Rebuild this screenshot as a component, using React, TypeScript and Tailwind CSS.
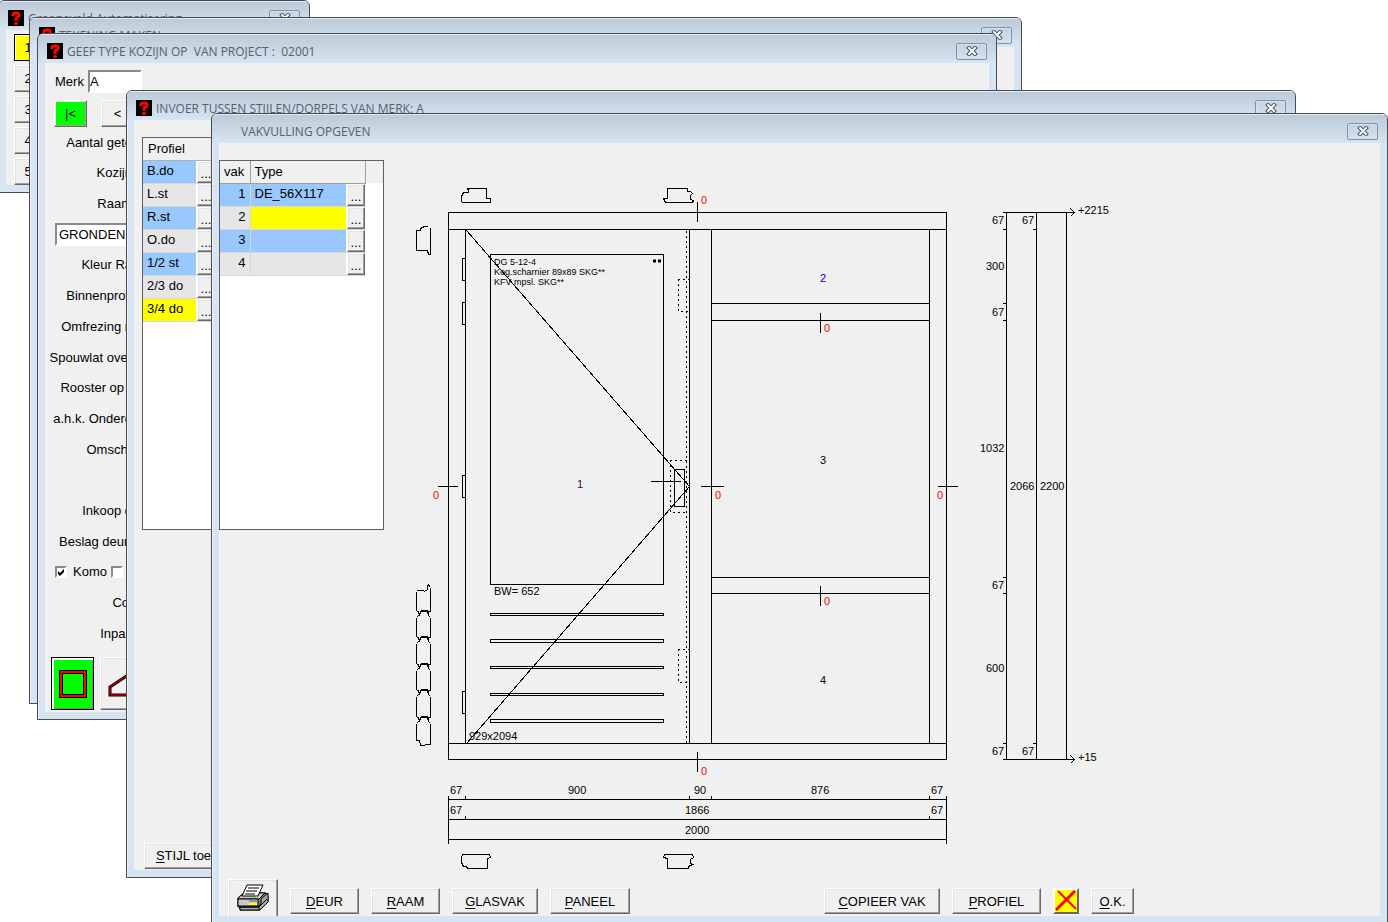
import type { ReactNode } from 'react';

const BEVEL =
  'border border-t-white border-l-white border-r-[#696969] border-b-[#696969] shadow-[inset_-1px_-1px_#a0a0a0,inset_1px_1px_#e3e3e3]';
const RAISED = `${BEVEL} bg-[#f0f0f0]`;
const SUNKEN =
  'border-2 border-t-[#8a8a8a] border-l-[#8a8a8a] border-r-white border-b-white bg-white';

const HelpIcon = () => (
  <svg viewBox="0 0 16 16" className="size-4 shrink-0" aria-hidden="true">
    <rect width="16" height="16" fill="#000" />
    <path
      d="M5 6V4L6 3H10L11 4V6L8 8V11"
      fill="none"
      stroke="#f00"
      strokeWidth="3"
      strokeLinejoin="bevel"
    />
    <path d="M7 12h2l1 1v1l-1 1H7l-1-1v-1z" fill="#f00" />
  </svg>
);

const CloseButton = () => (
  <button
    type="button"
    aria-label="Sluiten"
    className="flex h-[17px] w-[31px] shrink-0 items-center justify-center rounded-xs border border-[#8292ad] shadow-[inset_0_0_0_1px_#d3dfea]"
  >
    <svg viewBox="0 0 12 10" className="h-[10px] w-3" fill="none" strokeLinecap="square" aria-hidden="true">
      <path d="M3 2L9 8M9 2L3 8" stroke="#4c5464" strokeWidth="4" />
      <path d="M3 2L9 8M9 2L3 8" stroke="#fff" strokeWidth="2" />
    </svg>
  </button>
);

interface WindowProps {
  title: string;
  place: string;
  hasIcon?: boolean;
  children?: ReactNode;
}

const Window = ({ title, place, hasIcon = true, children }: WindowProps) => (
  <section
    className={`absolute flex flex-col overflow-hidden rounded-t-md border border-[#484c52] bg-[#d7e4f2] px-[7px] pb-[7px] shadow-[inset_1px_1px_#edf3f9] ${place}`}
  >
    <header className="-mx-[7px] flex h-[29px] shrink-0 items-center justify-between bg-linear-to-b from-[#bccad8] to-[#d7e4f2] pt-[5px] pr-[9px] pl-[9px] shadow-[inset_0_1px_#e4ebf2]">
      <div className="flex items-center gap-1">
        {hasIcon ? <HelpIcon /> : <span className="w-4" />}
        <h2 className="pt-px font-['Open_Sans',sans-serif] text-[12px] whitespace-pre text-[#56616b]">{title}</h2>
      </div>
      <CloseButton />
    </header>
    <div className="flex min-h-0 flex-1 flex-col bg-[#f0f0f0]">{children}</div>
  </section>
);

const PushButton = ({ label, width }: { label: string; width: string }) => (
  <button type="button" className={`h-[26px] shrink-0 pt-0.5 text-[13px] ${RAISED} ${width}`}>
    <span className="underline underline-offset-2">{label[0]}</span>
    {label.slice(1)}
  </button>
);

const MoreButton = () => (
  <button type="button" className={`block h-[22px] w-[18px] pt-1 text-[13px] leading-4 ${RAISED}`}>
    ...
  </button>
);

const menuKeys = ['2', '3', '4', '5'];

const formLabels = [
  'Aantal gete',
  'Kozijn',
  'Raam',
  '',
  'Kleur Ra',
  'Binnenprofi',
  'Omfrezing n',
  'Spouwlat over',
  'Rooster op r',
  'a.h.k. Onderd',
  'Omschr',
  '',
  'Inkoop d',
  'Beslag deur/',
  'komo',
  'Col',
  'Inpas',
];

const profiles = [
  { name: 'B.do', fill: 'bg-[#99c8ff]' },
  { name: 'L.st', fill: 'bg-[#e6e6e6]' },
  { name: 'R.st', fill: 'bg-[#99c8ff]' },
  { name: 'O.do', fill: 'bg-[#e6e6e6]' },
  { name: '1/2 st', fill: 'bg-[#99c8ff]' },
  { name: '2/3 do', fill: 'bg-[#e6e6e6]' },
  { name: '3/4 do', fill: 'bg-[#ffff00]' },
];

const panes = [
  { nr: 1, type: 'DE_56X117', row: 'bg-[#99c8ff]', fill: 'bg-[#99c8ff]' },
  { nr: 2, type: '', row: 'bg-[#e6e6e6]', fill: 'bg-[#ffff00]' },
  { nr: 3, type: '', row: 'bg-[#99c8ff]', fill: 'bg-[#99c8ff]' },
  { nr: 4, type: '', row: 'bg-[#e6e6e6]', fill: 'bg-[#e6e6e6]' },
];

// x, y (baseline), text
const dimensions: [number, number, string][] = [
  [450, 794, '67'],
  [568, 794, '900'],
  [694, 794, '90'],
  [811, 794, '876'],
  [931, 794, '67'],
  [450, 814, '67'],
  [685, 814, '1866'],
  [931, 814, '67'],
  [685, 834, '2000'],
  [992, 224, '67'],
  [1022, 224, '67'],
  [986, 270, '300'],
  [992, 316, '67'],
  [980, 452, '1032'],
  [1010, 490, '2066'],
  [1040, 490, '2200'],
  [992, 589, '67'],
  [986, 672, '600'],
  [992, 755, '67'],
  [1022, 755, '67'],
  [1078, 214, '+2215'],
  [1078, 761, '+15'],
  [494, 595, 'BW= 652'],
  [469, 740, '929x2094'],
  [820, 464, '3'],
  [820, 684, '4'],
];

const zeros = [
  [701, 204],
  [701, 775],
  [433, 499],
  [715, 499],
  [937, 499],
  [824, 332],
  [824, 605],
];

const hinges = [258, 302, 475, 691];
const slats = [
  [613, 2],
  [639, 3],
  [666, 2],
  [693, 2],
  [719, 3],
];
const joints = [612, 638, 665, 691, 718];

const FrameDrawing = () => (
  <svg
    viewBox="384 143 996 736"
    className="h-[736px] w-[996px] shrink-0 font-['Liberation_Sans',Arial,sans-serif]"
    role="img"
    aria-label="Kozijn"
  >
    <g transform="translate(.5 .5)" fill="none" stroke="#000" shapeRendering="crispEdges">
      {/* frame */}
      <path d="M448 212H946V759H448ZM448 229H946M448 743H946M465 229V743M689 229V743M711 229V743M929 229V743" />
      <path d="M711 303H929M711 320H929M711 577H929M711 593H929" />

      {/* door leaf */}
      <path d="M490 254H663V584H490Z" />
      <path d="M466 230L689 486L466 743" />
      {hinges.map((y) => (
        <path key={y} d={`M465 ${y}H462V${y + 22}H465`} />
      ))}
      {slats.map(([y, h]) => (
        <rect key={y} x="490" y={y} width="173" height={h} />
      ))}
      <path strokeDasharray="2 3" d="M686 230V743M689 279H678V311H689M689 649H678V682H689M686 460H670V512H686" />
      <path d="M674 469H684V506H674ZM650 481H680" />

      {/* section marks */}
      <path d="M697 201V221M697 751V771M437 486H457M700 486H723M937 486H957M820 312V332M820 585V605" />

      {/* dimension lines */}
      <path d="M448 795V843M946 795V843M448 799H946M448 819H946M448 839H946" />
      <path d="M465 795V799M689 795V799M711 795V799M929 795V799M465 815V819M929 815V819" />
      <path d="M1006 212V759M1036 212V759M1066 212V759M1002 212H1074M1002 759H1074" />
      <path d="M1070 208L1074 212L1070 216M1070 755L1074 759L1070 763" />
      <path d="M1002 229H1006M1002 303H1006M1002 320H1006M1002 577H1006M1002 593H1006M1002 743H1006M1032 229H1036M1032 743H1036" />

      {/* profile sections */}
      <path d="M467 188H486V198H490V202H462L461 201V196L463 192H468V190Z" />
      <path d="M667 188H687V191H690L692 193L690 195V199L693 200L692 202H665L663 198H667Z" />
      <path d="M430 227V254H428L427 250H416V230H420V228L424 226H427" />
      <path d="M462 854H489L490 857L487 858V868H467L466 866H463L461 862V857Z" />
      <path d="M664 854H692L693 857L690 859V863L692 864L688 866V868H667V858L663 857Z" />
      <path d="M416 590H423L424 591L427 589V586L428 584L430 587" />
      <path d="M416 591V610M430 587V610" />
      {joints.map((y, i) => (
        <g key={y}>
          <path d={`M416 ${y - 1}H418L419 ${y + 3}L420 ${y - 1}H427L428 ${y + 3}V${y - 1}H430M420 ${y - 2}H427`} />
          <path d={`M416 ${y + 5}V${(joints[i + 1] ?? 742) - 2}M430 ${y + 5}V${(joints[i + 1] ?? 746) - 2}`} />
          <path d={`M416 ${y + 5}L418 ${y + 3}M430 ${y + 5}L428 ${y + 3}`} />
        </g>
      ))}
      <path d="M416 740H419L420 745H424L425 744H430" />
    </g>

    <g fontSize="11">
      {dimensions.map(([x, y, text]) => (
        <text key={`${x}-${y}`} x={x} y={y}>
          {text}
        </text>
      ))}
      <text x="577" y="488" fill="#400050">1</text>
      <text x="820" y="282" fill="#0000e0">2</text>
      {zeros.map(([x, y]) => (
        <text key={`${x}-${y}`} x={x} y={y} fill="#ff0000">0</text>
      ))}
    </g>
    <g fontSize="9">
      <text x="494" y="265">DG 5-12-4</text>
      <text x="494" y="275">Kog.scharnier 89x89 SKG**</text>
      <text x="494" y="285">KFV mpsl. SKG**</text>
    </g>
    <path d="M653 261h3M658 261h3" stroke="#000" strokeWidth="3" />
  </svg>
);

const PrinterIcon = () => (
  <svg viewBox="0 0 32 28" className="h-7 w-8" aria-hidden="true" stroke="#000" strokeLinejoin="round">
    <path d="M1 14L7 9H29L31 12V18L23 26H3V23H1Z" fill="#808080" />
    <path d="M1 14L7 9H28L22 15H1Z" fill="#c8c8c8" />
    <path d="M10 1H26L21 12H5Z" fill="#fff" />
    <path d="M11 4H22M9 7H20M8 10H18" />
    <path d="M1 15H21V22H1Z" fill="#c8c8c8" />
    <path d="M3 23H21L24 20V15L31 9V18L23 26H3Z" fill="#a8a8a8" />
    <path d="M3 23H22L30 15M22 23V26" fill="none" />
    <path d="M17 14L20 12" stroke="#0f0" />
    <path d="M12 17H20" stroke="#666" />
    <path d="M12 20H20" stroke="#ff0" strokeWidth="2" />
  </svg>
);

const TypeWindow = () => (
  <Window title="GEEF TYPE KOZIJN OP  VAN PROJECT :  02001" place="top-[33px] left-[37px] h-[687px] w-[960px]">
    <div className="flex items-center gap-1 pt-[7px] pl-[10px]">
      <label htmlFor="merk">Merk</label>
      <input id="merk" defaultValue="A" className={`h-[23px] w-[54px] ${SUNKEN}`} />
    </div>
    <div className="flex gap-[14px] pt-[7px] pl-[9px]">
      <button type="button" className={`h-[27px] w-[33px] bg-[#00ff00] ${BEVEL}`}>
        |&lt;
      </button>
      <button type="button" className={`h-[27px] w-[33px] ${RAISED}`}>
        &lt;
      </button>
    </div>
    <div className="flex flex-1 flex-col">
      {formLabels.map((label, i) => (
        <div key={i} className="flex flex-1 items-center">
          {i === 3 ? (
            <input
              aria-label="Soort"
              defaultValue="GRONDEN"
              className={`ml-[10px] h-[23px] w-[90px] px-0.5 ${SUNKEN}`}
            />
          ) : label === 'komo' ? (
            <div className="flex items-center gap-1 pl-[10px]">
              <input
                id="komo"
                type="checkbox"
                defaultChecked
                className={`size-3 appearance-none ${SUNKEN}`}
              />
              <svg viewBox="0 0 8 8" className="pointer-events-none -ml-[14px] size-2" aria-hidden="true">
                <path d="M1 3L3 5L7 1V4L3 8L1 6Z" />
              </svg>
              <label htmlFor="komo" className="pl-1">
                Komo
              </label>
              <input type="checkbox" aria-label="Keur" className={`size-3 appearance-none ${SUNKEN}`} />
            </div>
          ) : (
            <span className="w-[87px] text-right whitespace-nowrap">{label}</span>
          )}
        </div>
      ))}
    </div>
    <div className="flex gap-1.5 pt-2 pb-0.5 pl-1.5">
      <button
        type="button"
        aria-label="Rechthoek"
        className="flex h-[53px] w-[43px] items-center justify-center border border-black bg-[#00ff00] shadow-[inset_2px_2px_#fff,inset_-1px_-1px_#808080]"
      >
        <svg viewBox="0 0 28 28" className="size-7" fill="none" shapeRendering="crispEdges" aria-hidden="true">
          <path d="M2 2H26V26H2Z" stroke="#000" strokeWidth="4" />
          <path d="M2 2H26V26H2Z" stroke="#f00" strokeWidth="2" />
        </svg>
      </button>
      <button type="button" aria-label="Schuin" className={`h-[53px] w-[43px] pl-[7px] ${RAISED}`}>
        <svg viewBox="0 0 28 28" className="size-7" fill="none" aria-hidden="true">
          <path d="M2 25V17L26 1V25Z" stroke="#000" strokeWidth="3" />
          <path d="M2 25V17L26 1V25Z" stroke="#f00" strokeWidth="1" />
        </svg>
      </button>
    </div>
  </Window>
);

const ProfileWindow = () => (
  <Window title="INVOER TUSSEN STIJLEN/DORPELS VAN MERK: A" place="top-[90px] left-[126px] h-[788px] w-[1170px]">
    <div className="mt-[17px] ml-2 h-[393px] w-[160px] border border-[#606060] bg-white">
      <table className="w-[74px] table-fixed border-collapse text-left">
        <colgroup>
          <col className="w-[53px]" />
          <col className="w-[21px]" />
        </colgroup>
        <thead>
          <tr className="h-[22px] bg-[#f0f0f0]">
            <th colSpan={2} className="border-b border-[#b0b0b0] p-0 pl-[5px] font-normal">
              Profiel
            </th>
          </tr>
        </thead>
        <tbody>
          {profiles.map(({ name, fill }) => (
            <tr key={name} className="h-[23px]">
              <td className={`border-b border-[#d8d8d8] p-0 pb-0.5 pl-1 leading-4 ${fill}`}>{name}</td>
              <td className="border-b border-[#d8d8d8] p-0 pl-px">
                <MoreButton />
              </td>
            </tr>
          ))}
        </tbody>
      </table>
    </div>
    <div className="mt-auto pb-px pl-[10px]">
      <button type="button" className={`h-[26px] w-[100px] ${RAISED}`}>
        <span className="underline underline-offset-2">S</span>TIJL toevoe
      </button>
    </div>
  </Window>
);

const PaneWindow = () => (
  <Window title="VAKVULLING OPGEVEN" place="top-[113px] right-0 -bottom-[2px] left-[211px]" hasIcon={false}>
    <div className="flex min-h-0 flex-1">
      <div className="mt-[17px] h-[370px] w-[165px] shrink-0 border border-[#606060] bg-white">
        <table className="w-full table-fixed border-collapse text-left">
          <colgroup>
            <col className="w-[30px]" />
            <col className="w-[96px]" />
            <col className="w-[19px]" />
            <col />
          </colgroup>
          <thead>
            <tr className="h-[22px] bg-[#f0f0f0]">
              <th className="border-r border-b border-[#a0a0a0] p-0 pl-1 font-normal">vak</th>
              <th colSpan={2} className="border-r border-b border-[#a0a0a0] p-0 pl-1 font-normal">
                Type
              </th>
              <th className="p-0" />
            </tr>
          </thead>
          <tbody>
            {panes.map(({ nr, type, row, fill }) => (
              <tr key={nr} className="h-[23px]">
                <td className={`border-r border-b border-[#d8d8d8] p-0 pr-1 pb-0.5 text-right leading-4 ${row}`}>
                  {nr}
                </td>
                <td className={`border-b border-[#d8d8d8] p-0 pb-0.5 pl-1 leading-4 ${fill}`}>{type}</td>
                <td className="border-b border-[#d8d8d8] p-0 pl-px">
                  <MoreButton />
                </td>
                <td className="p-0" />
              </tr>
            ))}
          </tbody>
        </table>
      </div>
      <FrameDrawing />
    </div>
    <footer className="flex h-[37px] shrink-0 items-start gap-3 overflow-hidden pl-[9px]">
      <button
        type="button"
        aria-label="Afdrukken"
        className={`flex h-[50px] w-[50px] shrink-0 justify-center pt-1 ${RAISED}`}
      >
        <PrinterIcon />
      </button>
      <div className="flex gap-3 pt-[9px]">
        <PushButton label="DEUR" width="w-[69px]" />
        <PushButton label="RAAM" width="w-[69px]" />
        <PushButton label="GLASVAK" width="w-[86px]" />
        <PushButton label="PANEEL" width="w-[80px]" />
      </div>
      <div className="ml-auto flex gap-3 pt-[9px] pr-[246px]">
        <PushButton label="COPIEER VAK" width="w-[116px]" />
        <PushButton label="PROFIEL" width="w-[89px]" />
        <button
          type="button"
          aria-label="Annuleren"
          className="flex size-[26px] items-center justify-center border-2 border-t-white border-l-white border-r-[#696969] border-b-[#696969] bg-[#ffff00]"
        >
          <svg viewBox="0 0 22 22" className="size-[22px]" stroke="#f00" strokeWidth="2" aria-hidden="true">
            <path d="M3 1L21 19" />
            <path d="M20 1L1 20" strokeWidth="3" />
          </svg>
        </button>
        <PushButton label="O.K." width="w-[43px]" />
      </div>
    </footer>
  </Window>
);

export default function App() {
  return (
    <main className="relative h-screen w-full overflow-hidden bg-white font-['Liberation_Sans',Arial,sans-serif] text-[13px] text-black">
      <Window title="Groeneveld Automatisering" place="top-0 -left-[2px] h-[193px] w-[312px]">
        <div className="flex flex-col gap-1 pt-1 pl-2">
          <button type="button" className="h-[27px] w-[40px] border border-black bg-[#ffff00] pr-3 shadow-[inset_1px_1px_#fff]">
            1
          </button>
          {menuKeys.map((key) => (
            <button key={key} type="button" className={`h-[27px] w-[40px] pr-3 ${RAISED}`}>
              {key}
            </button>
          ))}
        </div>
      </Window>
      <Window title="TEKENING MAKEN" place="top-[17px] left-[29px] h-[687px] w-[993px]" />
      <TypeWindow />
      <ProfileWindow />
      <PaneWindow />
    </main>
  );
}
